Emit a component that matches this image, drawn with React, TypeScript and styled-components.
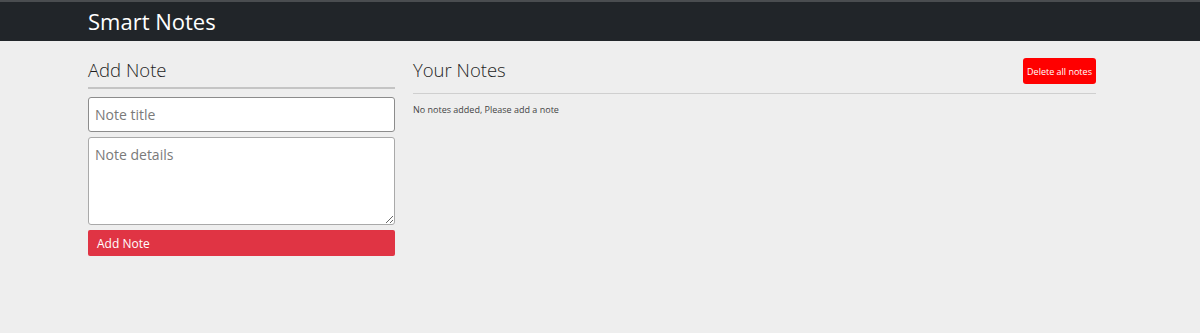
import React from "react";
import styled, { createGlobalStyle } from "styled-components";

const GlobalStyle = createGlobalStyle`
  html, body {
    margin: 0;
    padding: 0;
    background-color: #eeeeee;
    font-family: "Open Sans", "Noto Sans", sans-serif;
  }
  * {
    box-sizing: border-box;
  }
`;

const App = () => {
  return (
    <>
      <GlobalStyle />
      <Navbar>
        <Brand>Smart Notes</Brand>
      </Navbar>
      <Main>
        <AddColumn>
          <Heading>Add Note</Heading>
          <Divider $thick />
          <Form>
            <TitleInput placeholder="Note title" />
            <DetailsInput placeholder="Note details" />
            <AddButton type="button">Add Note</AddButton>
          </Form>
        </AddColumn>
        <NotesColumn>
          <NotesHeader>
            <Heading>Your Notes</Heading>
            <DeleteButton type="button">Delete all notes</DeleteButton>
          </NotesHeader>
          <Divider />
          <EmptyText>No notes added, Please add a note</EmptyText>
        </NotesColumn>
      </Main>
    </>
  );
};

export default App;

const Navbar = styled.header`
  height: 41px;
  background-color: #212529;
  border-top: 2px solid #4a4d50;
  padding-left: 88px;
  display: flex;
  align-items: center;
`;

const Brand = styled.h1`
  margin: 0;
  color: #ffffff;
  font-size: 22px;
  font-weight: 400;
  line-height: 1;
  padding-bottom: 2px;
`;

const Main = styled.main`
  display: flex;
  gap: 18px;
  padding: 17px 0 0 88px;
  width: 1096px;
`;

const AddColumn = styled.section`
  width: 307px;
  flex-shrink: 0;

  h2 {
    margin-bottom: 3px;
  }
`;

const NotesColumn = styled.section`
  flex: 1;
`;

const Heading = styled.h2`
  margin: 0;
  font-size: 18.5px;
  font-weight: 300;
  color: #1e1e1e;
  line-height: 26px;
  position: relative;
  top: -1px;
`;

const NotesHeader = styled.div`
  display: flex;
  justify-content: space-between;
  align-items: center;
  height: 26px;
  margin-bottom: 9px;
`;

const Divider = styled.hr<{ $thick?: boolean }>`
  margin: 0;
  border: 0;
  border-top: ${(p) => (p.$thick ? "2px solid #c4c4c4" : "1px solid #cfcfcf")};
`;

const Form = styled.div`
  display: flex;
  flex-direction: column;
  gap: 5px;
  margin-top: 8px;
`;

const fieldStyles = `
  width: 100%;
  border: 1px solid #a9a9a9;
  border-radius: 3px;
  background: #ffffff;
  font-family: "Open Sans", "Noto Sans", sans-serif;
  font-size: 14px;
  color: #333;
  padding: 7px 6px;
  outline: none;
  &::placeholder {
    color: #7a7a7a;
  }
`;

const TitleInput = styled.input`
  ${fieldStyles}
  height: 35px;
  border-color: #8c8c8c;
`;

const DetailsInput = styled.textarea`
  ${fieldStyles}
  height: 88px;
  resize: vertical;
  display: block;
`;

const AddButton = styled.button`
  height: 26px;
  border: 0;
  border-radius: 2px;
  background-color: #e03444;
  color: #ffffff;
  font-family: "Open Sans", "Noto Sans", sans-serif;
  font-size: 12px;
  text-align: left;
  padding: 0 9px;
`;

const DeleteButton = styled.button`
  height: 26px;
  width: 73px;
  border: 0;
  border-radius: 3px;
  background-color: #ff0000;
  color: #ffffff;
  font-family: "Open Sans", "Noto Sans", sans-serif;
  font-size: 9px;
  padding: 0;
  white-space: nowrap;
`;

const EmptyText = styled.p`
  margin: 9px 0 0;
  font-size: 9px;
  color: #444;
`;
